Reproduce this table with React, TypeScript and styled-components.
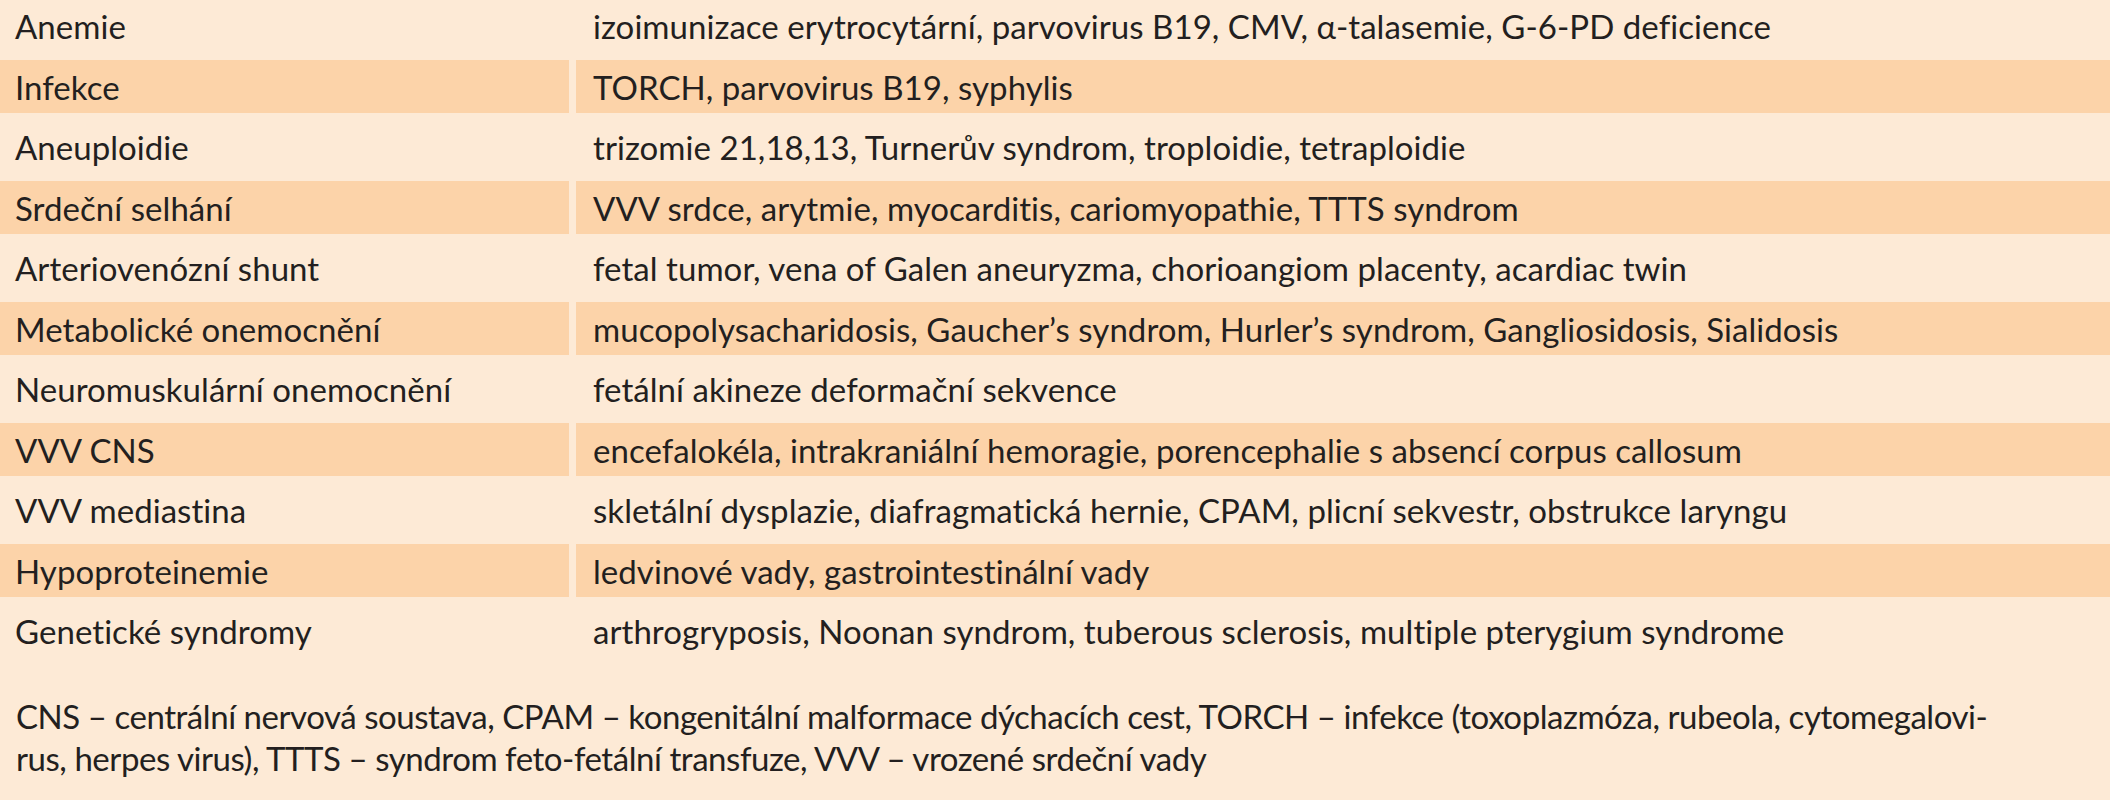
import React from 'react';
import styled, { createGlobalStyle } from 'styled-components';

type Row = {
  cause: string;
  examples: string;
};

const rows: Row[] = [
  {
    cause: 'Anemie',
    examples: 'izoimunizace erytrocytární, parvovirus B19, CMV, α-talasemie, G-6-PD deficience',
  },
  { cause: 'Infekce', examples: 'TORCH, parvovirus B19, syphylis' },
  {
    cause: 'Aneuploidie',
    examples: 'trizomie 21,18,13, Turnerův syndrom, troploidie, tetraploidie',
  },
  {
    cause: 'Srdeční selhání',
    examples: 'VVV srdce, arytmie, myocarditis, cariomyopathie, TTTS syndrom',
  },
  {
    cause: 'Arteriovenózní shunt',
    examples: 'fetal tumor, vena of Galen aneuryzma, chorioangiom placenty, acardiac twin',
  },
  {
    cause: 'Metabolické onemocnění',
    examples:
      'mucopolysacharidosis, Gaucher’s syndrom, Hurler’s syndrom, Gangliosidosis, Sialidosis',
  },
  { cause: 'Neuromuskulární onemocnění', examples: 'fetální akineze deformační sekvence' },
  {
    cause: 'VVV CNS',
    examples: 'encefalokéla, intrakraniální hemoragie, porencephalie s absencí corpus callosum',
  },
  {
    cause: 'VVV mediastina',
    examples:
      'skletální dysplazie, diafragmatická hernie, CPAM, plicní sekvestr, obstrukce laryngu',
  },
  { cause: 'Hypoproteinemie', examples: 'ledvinové vady, gastrointestinální vady' },
  {
    cause: 'Genetické syndromy',
    examples: 'arthrogryposis, Noonan syndrom, tuberous sclerosis, multiple pterygium syndrome',
  },
];

const GlobalStyle = createGlobalStyle`
  html, body {
    margin: 0;
    padding: 0;
    background: #fdead6;
    overflow: hidden;
  }
  body {
    font-family: Lato, "Open Sans", "Noto Sans", sans-serif;
    color: #231f20;
  }
`;

export default function App() {
  return (
    <>
      <GlobalStyle />
      <S.Page>
        <S.Table>
          {rows.map(({ cause, examples }, i) => (
            <React.Fragment key={cause}>
              <S.Cell $shaded={i % 2 === 1} $side="left">
                {cause}
              </S.Cell>
              <S.Cell $shaded={i % 2 === 1} $side="right">
                {examples}
              </S.Cell>
            </React.Fragment>
          ))}
        </S.Table>
        <S.Footnote>
          <S.NoteLine>
            CNS – centrální nervová soustava, CPAM – kongenitální malformace dýchacích cest,
            TORCH – infekce (toxoplazmóza, rubeola, cytomegalovi-
          </S.NoteLine>
          <S.NoteLine>
            rus, herpes virus), TTTS – syndrom feto-fetální transfuze, VVV – vrozené srdeční vady
          </S.NoteLine>
        </S.Footnote>
      </S.Page>
    </>
  );
}

const S = {
  Page: styled.div`
    width: 2110px;
    height: 800px;
    display: flex;
    flex-direction: column;
    background: #fdead6;
  `,
  Table: styled.div`
    display: grid;
    grid-template-columns: 569px 1fr;
    column-gap: 7px;
    row-gap: 7.5px;
    margin-top: -0.5px;
  `,
  Cell: styled.div<{ $shaded: boolean; $side: 'left' | 'right' }>`
    height: 53px;
    display: flex;
    align-items: center;
    padding-left: ${(p) => (p.$side === 'left' ? '15px' : '17px')};
    font-size: 33px;
    letter-spacing: 0.05px;
    white-space: nowrap;
    background: ${(p) => (p.$shaded ? '#fcd3a9' : '#fdead6')};
  `,
  Footnote: styled.div`
    margin-top: 37px;
    padding-left: 16px;
    font-size: 33px;
    line-height: 42px;
    letter-spacing: -0.45px;
  `,
  NoteLine: styled.div`
    white-space: nowrap;
  `,
};
